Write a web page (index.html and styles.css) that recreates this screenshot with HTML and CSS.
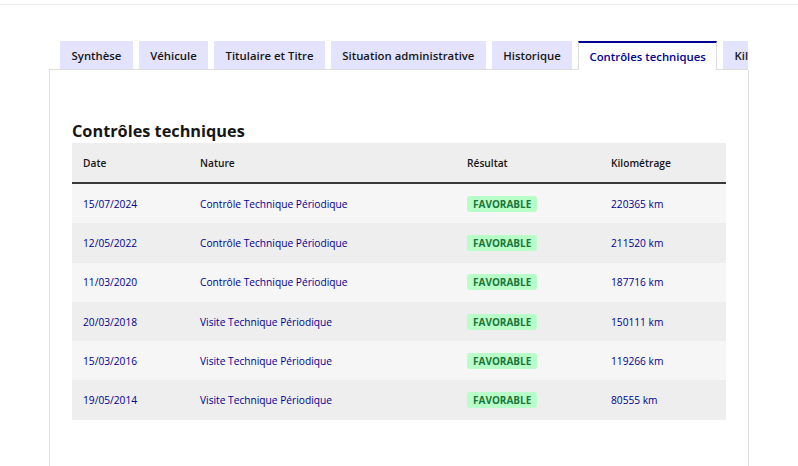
FILE: index.html
```html
<!DOCTYPE html>
<html lang="fr">
<head>
<meta charset="utf-8">
<title>Contrôles techniques</title>
<link rel="stylesheet" href="styles.css">
</head>
<body>
<div class="topbar"></div>
<div class="tabs">
  <ul class="tablist">
    <li class="tab">Synthèse</li>
    <li class="tab">Véhicule</li>
    <li class="tab">Titulaire et Titre</li>
    <li class="tab">Situation administrative</li>
    <li class="tab">Historique</li>
    <li class="tab active">Contrôles techniques</li>
    <li class="tab">Kilométrage</li>
  </ul>
  <section class="panel">
    <h2 class="title">Contrôles techniques</h2>
    <div class="table">
      <div class="row head">
        <div class="cell">Date</div>
        <div class="cell">Nature</div>
        <div class="cell">Résultat</div>
        <div class="cell">Kilométrage</div>
      </div>
      <div class="row odd">
        <div class="cell link">15/07/2024</div>
        <div class="cell link">Contrôle Technique Périodique</div>
        <div class="cell"><span class="badge">Favorable</span></div>
        <div class="cell link">220365 km</div>
      </div>
      <div class="row even">
        <div class="cell link">12/05/2022</div>
        <div class="cell link">Contrôle Technique Périodique</div>
        <div class="cell"><span class="badge">Favorable</span></div>
        <div class="cell link">211520 km</div>
      </div>
      <div class="row odd">
        <div class="cell link">11/03/2020</div>
        <div class="cell link">Contrôle Technique Périodique</div>
        <div class="cell"><span class="badge">Favorable</span></div>
        <div class="cell link">187716 km</div>
      </div>
      <div class="row even">
        <div class="cell link">20/03/2018</div>
        <div class="cell link">Visite Technique Périodique</div>
        <div class="cell"><span class="badge">Favorable</span></div>
        <div class="cell link">150111 km</div>
      </div>
      <div class="row odd">
        <div class="cell link">15/03/2016</div>
        <div class="cell link">Visite Technique Périodique</div>
        <div class="cell"><span class="badge">Favorable</span></div>
        <div class="cell link">119266 km</div>
      </div>
      <div class="row even">
        <div class="cell link">19/05/2014</div>
        <div class="cell link">Visite Technique Périodique</div>
        <div class="cell"><span class="badge">Favorable</span></div>
        <div class="cell link">80555 km</div>
      </div>
    </div>
  </section>
</div>
</body>
</html>
```

FILE: styles.css
```css
* { box-sizing: border-box; }
html, body { margin: 0; padding: 0; background: #fff; overflow: hidden; }
body {
  font-family: "Open Sans", "Noto Sans", "Liberation Sans", sans-serif;
  color: #161616;
  height: 466px;
}
.topbar {
  height: 5px;
  border-bottom: 1px solid #ececec;
}
.tabs {
  margin: 36px 0 0 49px;
  width: 700px;
}
.tablist {
  list-style: none;
  margin: 0;
  padding: 0 0 0 11px;
  width: 699px;
  height: 29px;
  display: flex;
  align-items: flex-start;
  gap: 5.6px;
  overflow: hidden;
  box-shadow: inset 0 -1px 0 0 #dddddd;
}
.tab {
  flex: none;
  height: 28px;
  padding: 0 11.6px;
  display: flex;
  align-items: center;
  background: #e3e3fd;
  font-size: 11.35px;
  font-weight: 600;
  color: #161616;
  white-space: nowrap;
}
.tab.active {
  height: 29px;
  background: #fff;
  color: #000091;
  border-top: 2px solid #000091;
  border-left: 1px solid #dddddd;
  border-right: 1px solid #dddddd;
  padding: 0 10.6px 1px;
}
.panel {
  border: 1px solid #dddddd;
  border-top: none;
  height: 398px;
  padding: 51px 22px 0;
}
.title {
  margin: 0 0 2px;
  font-size: 16.3px;
  line-height: 20px;
  font-weight: 700;
  color: #161616;
}
.table {
  width: 654px;
}
.row {
  display: grid;
  grid-template-columns: 117px 267px 144px 1fr;
  align-items: center;
  height: 39.3px;
}
.row.head {
  height: 41px;
  background: #eeeeee;
  border-bottom: 2px solid #3a3a3a;
  font-weight: 600;
}
.row.odd { background: #f6f6f6; }
.row.even { background: #eeeeee; }
.cell {
  padding-left: 11px;
  font-size: 10.2px;
  white-space: nowrap;
}
.cell.link { color: #000091; }
.badge {
  display: inline-block;
  background: #b8fec9;
  color: #18753c;
  text-transform: uppercase;
  font-weight: 700;
  font-size: 10px;
  line-height: 16px;
  padding: 0 6px;
  border-radius: 3px;
}
```
